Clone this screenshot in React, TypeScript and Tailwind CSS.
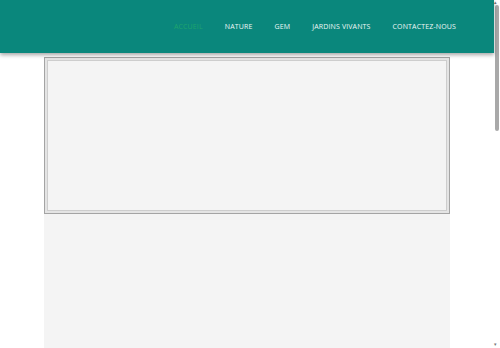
const navItems = ["Accueil", "Nature", "GEM", "Jardins vivants", "Contactez-nous"];

export default function App() {
  return (
    <div className="flex h-[348px] w-[500px] overflow-hidden bg-white font-['Open_Sans',sans-serif]">
      <div className="flex min-w-0 flex-1 flex-col">
        <header className="relative z-10 flex h-[53px] shrink-0 items-center justify-end bg-[#0a877c] pr-[38px] shadow-[0_2px_4px_rgba(0,0,0,0.35)]">
          <nav className="flex items-center gap-[22px] pt-[2px]">
            {navItems.map((item, i) => (
              <a
                key={item}
                href="#"
                className={
                  i === 0
                    ? "text-[7px] uppercase tracking-[0.02em] text-[#1fa56d]"
                    : "text-[7px] uppercase tracking-[0.02em] text-[#eef8f6]"
                }
              >
                {item}
              </a>
            ))}
          </nav>
        </header>
        <main className="flex flex-1 flex-col px-[44px] pt-[4px]">
          <div className="h-[157px] shrink-0 border border-[#a4a4a4] bg-[#f4f4f4]">
            <div className="h-full border-2 border-[#e4e4e4] shadow-[inset_0_0_0_1px_#cdcdcd]" />
          </div>
          <div className="flex-1 bg-[#f4f4f4]" />
        </main>
      </div>
      <div className="flex w-[6px] shrink-0 flex-col bg-white">
        <div className="h-[5px] text-[5px] leading-[5px] text-[#777]">▴</div>
        <div className="mx-auto h-[126px] w-[4px] rounded-sm bg-[#a9a9a9]" />
        <div className="flex-1" />
        <div className="h-[6px] text-[5px] leading-[5px] text-[#777]">▾</div>
      </div>
    </div>
  );
}
